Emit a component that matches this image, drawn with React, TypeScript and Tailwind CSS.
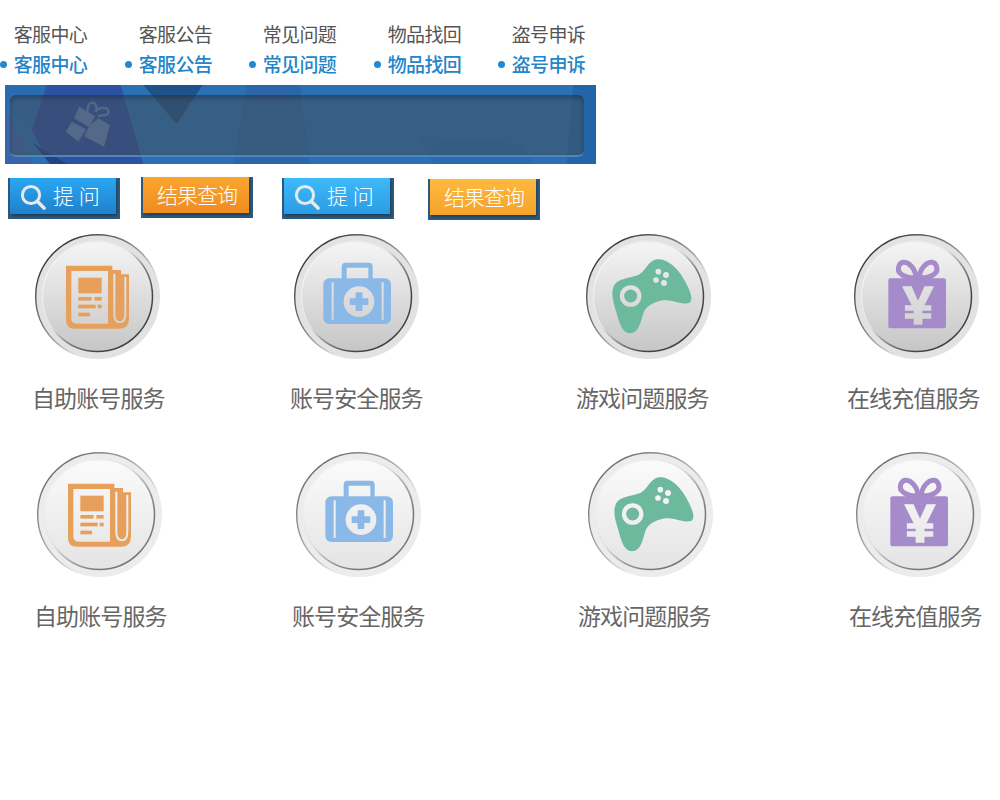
import React from "react";

const CJK = "font-['Noto_Sans_CJK_SC','Liberation_Sans',sans-serif]";

const navItems = [
  { t: "客服中心", w: "w-[87px]" },
  { t: "客服公告", w: "w-[125px]" },
  { t: "常见问题", w: "w-[124px]" },
  { t: "物品找回", w: "w-[125px]" },
  { t: "盗号申诉", w: "w-[124px]" },
];

function NavItem({ t, w }: { t: string; w: string }) {
  return (
    <div className={`${w} flex flex-col items-end whitespace-nowrap text-[19px] leading-[30px] tracking-[-0.7px]`}>
      <span className="text-[#555555]">{t}</span>
      <span className="flex items-center font-medium text-[#2485c8]">
        <span className="mr-[7px] h-[7px] w-[7px] shrink-0 rounded-full bg-[#2388d0]" />
        {t}
      </span>
    </div>
  );
}

function Banner() {
  return (
    <div className="relative ml-[5px] h-[79px] w-[591px] overflow-hidden bg-[#2a70b2] pb-[7px] pl-[5px] pr-[12px] pt-[10px]">
      <svg className="absolute left-0 top-0" width="591" height="79" viewBox="0 0 591 79">
        <g transform="translate(-5,-75) scale(0.3333)">
          <polygon points="140,225 362,225 430,462 150,462 95,360" fill="#2d52a2" />
          <polygon points="15,225 140,225 95,360 15,290" fill="#2a6cb0" />
          <polygon points="15,290 100,462 15,462" fill="#3a64aa" />
          <polygon points="100,400 200,462 150,462" fill="#1f4480" />
          <polygon points="430,225 608,225 530,342" fill="#1f5288" />
          <polygon points="740,225 900,225 930,462 700,462" fill="#2a66a8" />
          <polygon points="1260,380 1560,400 1600,462 1300,462" fill="#296bae" />
          <polygon points="1480,225 1770,225 1700,380" fill="#2b70b3" />
          <polygon points="1720,225 1790,225 1790,462 1700,462" fill="#2366a8" />
          <g fill="#5f80b4">
            <polygon points="238,290 285,318 268,352 222,325" />
            <polygon points="295,325 330,345 312,410 252,378 270,345" />
            <polygon points="215,335 258,358 235,395 198,365" />
            <path d="M262,308 C262,270 290,268 290,300 M285,305 C305,285 340,295 320,315 L295,318" fill="none" stroke="#5f80b4" strokeWidth="7" />
          </g>
        </g>
      </svg>
      <div className="relative h-[62px] w-full rounded-[6px] border-b-2 border-b-[#4f86b8] bg-[#484c50]/45 shadow-[inset_0_3px_4px_rgba(15,35,60,0.4)]" />
    </div>
  );
}

function Button({ text, face, m, wide }: { text: string; face: string; m: string; wide?: boolean }) {
  return (
    <div className={`${m} h-[41px] w-[112px] bg-[#2d5c80] pl-[2px] pr-[4px] pb-[5px]`}>
      <div className={`${face} flex h-[36px] w-[106px] items-center text-white shadow-[1px_2px_3px_rgba(0,0,0,0.35)]`}>
        {wide ? (
          <>
            <svg className="ml-[10px] mt-[2px] blur-[0.3px]" width="26" height="26" viewBox="0 0 26 26" fill="none">
              <circle cx="11" cy="11" r="8.6" stroke="#e4eaee" strokeWidth="3" />
              <path d="M17.5 17.5 L24 24" stroke="#e4eaee" strokeWidth="3.6" strokeLinecap="round" />
            </svg>
            <span className="mb-[2px] ml-[7px] whitespace-pre text-[21px] font-light leading-none">提 问</span>
          </>
        ) : (
          <span className="mb-[2px] ml-[14px] text-[21px] font-light leading-none tracking-[-1px]">{text}</span>
        )}
      </div>
    </div>
  );
}

function Disk({ id, light, children }: { id: string; light?: boolean; children: React.ReactNode }) {
  return (
    <svg width="125" height="125" viewBox="0 0 125 125" className="block">
      <defs>
        <linearGradient id={`${id}o`} x1="0.15" y1="0.15" x2="0.85" y2="0.85">
          <stop offset="0" stopColor={light ? "#707070" : "#3a3a3a"} />
          <stop offset="0.5" stopColor={light ? "#b8b8b8" : "#999999"} />
          <stop offset="0.72" stopColor={light ? "#ececec" : "#e2e2e2"} />
          <stop offset="1" stopColor={light ? "#ececec" : "#e2e2e2"} />
        </linearGradient>
        <linearGradient id={`${id}i`} x1="0.15" y1="0.15" x2="0.85" y2="0.85">
          <stop offset="0" stopColor="#f2f2f2" />
          <stop offset="0.4" stopColor="#e2e2e2" />
          <stop offset="0.6" stopColor={light ? "#aaaaaa" : "#888888"} />
          <stop offset="0.85" stopColor={light ? "#777777" : "#444444"} />
          <stop offset="1" stopColor={light ? "#777777" : "#444444"} />
        </linearGradient>
        <linearGradient id={`${id}f`} x1="0" y1="0" x2="0" y2="1">
          <stop offset="0" stopColor={light ? "#fbfbfb" : "#f5f5f5"} />
          <stop offset="1" stopColor={light ? "#e4e4e4" : "#c6c6c6"} />
        </linearGradient>
        <linearGradient id={`${id}g`} gradientUnits="userSpaceOnUse" x1="0" y1="48" x2="0" y2="381">
          <stop offset="0" stopColor={light ? "#fbfbfb" : "#f5f5f5"} />
          <stop offset="1" stopColor={light ? "#e4e4e4" : "#c6c6c6"} />
        </linearGradient>
      </defs>
      <circle cx="62.5" cy="62.5" r="61.8" fill={light ? "#ececec" : "#e2e2e2"} stroke={`url(#${id}o)`} strokeWidth="1.4" />
      <circle cx="62.5" cy="62.5" r="55" fill={`url(#${id}f)`} stroke={`url(#${id}i)`} strokeWidth="1.5" />
      <g className="blur-[0.25px]">{children}</g>
    </svg>
  );
}

function Paper({ bg }: { bg: string }) {
  return (
    <g transform="translate(-10,-9) scale(0.3333)">
      <path d="M123,122 H262 V135 H288 V148 H312 V280 Q312,311 285,311 H150 Q123,311 123,285 Z" fill="#e6a05c" />
      <path d="M139,138 H249 V296 H155 Q139,296 139,280 Z" fill={bg} />
      <g fill="#e6a05c">
        <rect x="160" y="158" width="70" height="47" />
        <rect x="160" y="216" width="40" height="11" />
        <rect x="208" y="216" width="22" height="11" />
        <rect x="160" y="239" width="52" height="11" />
        <rect x="218" y="239" width="12" height="11" />
        <rect x="160" y="263" width="35" height="11" />
      </g>
      <path d="M268,146 V268 Q268,292 285,292 Q301,292 301,268 V156" fill="none" stroke={bg} strokeWidth="6" />
    </g>
  );
}

function Kit({ bg }: { bg: string }) {
  return (
    <g transform="translate(-9,-9) scale(0.3333)">
      <path fillRule="evenodd" d="M182,113 H251 Q263,113 263,125 V165 H170 V125 Q170,113 182,113 Z M185,128 V165 H250 V128 Z" fill="#8ab9e8" />
      <rect x="115" y="160" width="203" height="137" rx="18" fill="#8ab9e8" />
      <rect x="140" y="172" width="6" height="113" fill={bg} />
      <rect x="290" y="172" width="6" height="113" fill={bg} />
      <circle cx="222" cy="230" r="46" fill={bg} />
      <rect x="194" y="220" width="56" height="20" rx="2" fill="#8ab9e8" />
      <rect x="212" y="202" width="20" height="56" rx="2" fill="#8ab9e8" />
    </g>
  );
}

function Pad({ bg }: { bg: string }) {
  return (
    <g transform="translate(-11,-9) scale(0.3333)">
      <path d="M245,103 C275,100 305,125 325,160 C345,195 358,225 342,234 C320,240 290,222 265,226 C235,230 212,245 205,265 C197,290 192,325 165,325 C142,325 133,295 125,265 C116,235 105,205 118,180 C130,160 165,160 190,150 C212,140 218,108 245,103 Z" fill="#6cb99d" />
      <circle cx="167" cy="213" r="26" fill="none" stroke={bg} strokeWidth="13" />
      <circle cx="250" cy="140" r="8.5" fill={bg} />
      <circle cx="273" cy="150" r="9" fill={bg} />
      <circle cx="243" cy="165" r="8.5" fill={bg} />
      <circle cx="267" cy="174" r="9" fill={bg} />
    </g>
  );
}

function Gift({ bg }: { bg: string }) {
  return (
    <g transform="translate(-9,-9) scale(0.3333)">
      <path d="M214,158 C180,160 152,145 162,122 C174,98 208,118 214,158 Z" fill="none" stroke="#a58bc9" strokeWidth="15" />
      <path d="M222,158 C256,160 284,145 274,122 C262,98 228,118 222,158 Z" fill="none" stroke="#a58bc9" strokeWidth="15" />
      <rect x="130" y="160" width="173" height="150" rx="6" fill="#a58bc9" />
      <text x="219" y="298" textAnchor="middle" fontSize="160" fontWeight="700" fontFamily="'Liberation Sans',sans-serif" fill={bg} stroke={bg} strokeWidth="5">¥</text>
    </g>
  );
}

function Service({ w, iconM, label, id, light, kind }: { w: string; iconM: string; label: string; id: string; light?: boolean; kind: number }) {
  const bg = `url(#${id}g)`;
  return (
    <div className={`${w} flex flex-col items-start`}>
      <div className={iconM}>
        <Disk id={id} light={light}>
          {kind === 0 && <Paper bg={bg} />}
          {kind === 1 && <Kit bg={bg} />}
          {kind === 2 && <Pad bg={bg} />}
          {kind === 3 && <Gift bg={bg} />}
        </Disk>
      </div>
      <div className="-ml-[1px] mt-[18px] whitespace-nowrap text-[23px] leading-[40px] tracking-[-0.9px] text-[#666666]">{label}</div>
    </div>
  );
}

function Row({ m, light, p }: { m: string; light?: boolean; p: string }) {
  return (
    <div className={`flex ${m}`}>
      <Service w="w-[258px]" iconM="ml-[2px]" label="自助账号服务" id={`${p}a`} light={light} kind={0} />
      <Service w="w-[286px]" iconM="ml-[3px]" label="账号安全服务" id={`${p}b`} light={light} kind={1} />
      <Service w="w-[271px]" iconM="ml-[9px]" label="游戏问题服务" id={`${p}c`} light={light} kind={2} />
      <Service w="w-[132px]" iconM="ml-[6px]" label="在线充值服务" id={`${p}d`} light={light} kind={3} />
    </div>
  );
}

export default function App() {
  return (
    <div className={`min-h-[800px] w-[1000px] overflow-hidden bg-white pt-[19px] ${CJK}`}>
      <div className="flex">
        {navItems.map((n) => (
          <NavItem key={n.t} t={n.t} w={n.w} />
        ))}
      </div>
      <div className="mt-[6px]">
        <Banner />
      </div>
      <div className="mt-[13px] flex h-[43px] items-start">
        <Button text="提 问" wide m="ml-[8px] mt-[1px]" face="bg-gradient-to-b from-[#2aa7f2] to-[#2180cb]" />
        <Button text="结果查询" m="ml-[21px]" face="bg-gradient-to-b from-[#faa62e] to-[#ef8b20]" />
        <Button text="提 问" wide m="ml-[29px] mt-[1px]" face="bg-gradient-to-b from-[#3fb9fa] to-[#2b9ce4]" />
        <Button text="结果查询" m="ml-[34px] mt-[2px]" face="bg-gradient-to-b from-[#feb93f] to-[#f5a32b]" />
      </div>
      <Row m="ml-[33px] mt-[14px]" p="r1" />
      <Row m="ml-[35px] mt-[35px]" light p="r2" />
    </div>
  );
}
